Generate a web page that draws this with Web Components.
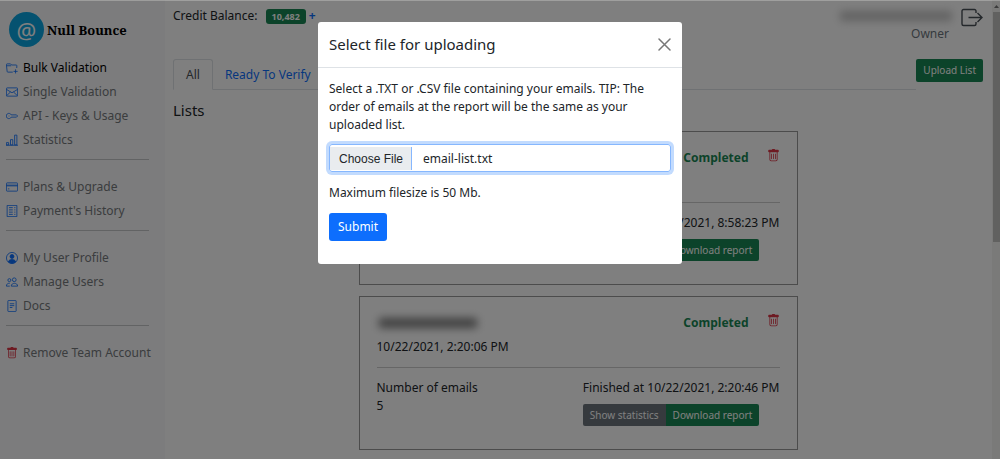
<!DOCTYPE html>
<html lang="en">
<head>
<meta charset="utf-8">
<meta name="viewport" content="width=device-width, initial-scale=1">
<title>Null Bounce</title>
<style>
    body {
        margin: 0;
        font: 12px/18px "Noto Sans", sans-serif;
        color: #212529;
        background: #fff;
        --blue: #0d6efd;
        --green: #198754;
        --red: #dc3545;
        --grey: #6c757d;
    }
</style>
</head>
<body>
<bounce-app></bounce-app>

<script>
const ICONS = {
    folder: '<path d="M9 13.5H2.5a1 1 0 0 1-1-1l-1-9a1 1 0 0 1 1-1h4.500L7.500 4h6a1 1 0 0 1 1 1L14.300 8M1 5h6M10 12.500h5.500M12.750 9.750v5.500"/>',
    envelope: '<path d="M1.5 2.5h13a1 1 0 0 1 1 1v9a1 1 0 0 1-1 1h-13a1 1 0 0 1-1-1v-9a1 1 0 0 1 1-1zM.5 4.5 8 9l7.5-4.5M.7 13 6 8M15.3 13 10 8"/>',
    key: '<path d="M7 6.500a3.500 3.500 0 1 0 0 3h7L15.500 8 14 6.500z"/><path d="M3.500 8h1"/>',
    bars: '<path d="M.5 11.500h3v3h-3zM6 7.500h3v7H6zM11.500 1.500h3v13h-3zM0 15h16"/>',
    card: '<path d="M1.5 2.5h13a1 1 0 0 1 1 1v9a1 1 0 0 1-1 1h-13a1 1 0 0 1-1-1v-9a1 1 0 0 1 1-1zM.5 5.500h15M.5 6.500h15M2.500 10.500h2"/>',
    receipt: '<path d="M1.5.5h13v15h-13zM4 3.5h5M4 6.5h5M4 9.5h5M4 12.5h5M11 3.5h1.500M11 6.500h1.500M11 9.500h1.500M11 12.500h1.500"/>',
    person: '<circle cx="8" cy="8" r="7.4"/><circle cx="8" cy="6" r="2.6" fill="currentColor"/><path fill="currentColor" d="M3 13c.8-2 2.5-3 5-3s4.2 1 5 3c-3 2.6-7 2.6-10 0z"/>',
    people: '<circle cx="11" cy="5" r="2.5"/><circle cx="4.5" cy="5.5" r="2"/><path d="M7 13.5c0-5 8.500-5 8.500 0zM5 13.500H.5c0-2.800 2-4 4.500-3.800"/>',
    file: '<path d="M3.5.5h9a1 1 0 0 1 1 1v13a1 1 0 0 1-1 1h-9a1 1 0 0 1-1-1v-13a1 1 0 0 1 1-1zM5 5h6M5 7.5h6M5 10h3.5"/>',
    trash: '<g fill="currentColor" stroke="none"><path d="M5.5 5.5A.5.5 0 0 1 6 6v6a.5.5 0 0 1-1 0V6a.5.5 0 0 1 .5-.5zm2.5 0a.5.5 0 0 1 .5.5v6a.5.5 0 0 1-1 0V6a.5.5 0 0 1 .5-.5zm3 .5a.5.5 0 0 0-1 0v6a.5.5 0 0 0 1 0V6z"/><path d="M14.5 3a1 1 0 0 1-1 1H13v9a2 2 0 0 1-2 2H5a2 2 0 0 1-2-2V4h-.5a1 1 0 0 1-1-1V2a1 1 0 0 1 1-1H6a1 1 0 0 1 1-1h2a1 1 0 0 1 1 1h3.500a1 1 0 0 1 1 1v1zM4.118 4 4 4.059V13a1 1 0 0 0 1 1h6a1 1 0 0 0 1-1V4.059L11.882 4H4.118zM2.500 3V2h11v1h-11z"/></g>',
};

class AppIcon extends HTMLElement {
    constructor() {
        super();
        this.attachShadow({mode: 'open'});
    }

    connectedCallback() {
        this.shadowRoot.innerHTML = `
        <style>
            :host {
                display: block;
                flex: none;
                width: 12px;
                height: 12px;
            }
            svg {
                display: block;
                width: 100%;
                height: 100%;
            }
        </style>
        <svg viewBox="0 0 16 16" fill="none" stroke="currentColor" stroke-width="1.1" aria-hidden="true">${ICONS[this.getAttribute('name')]}</svg>
        `;
    }
}

class NavItem extends HTMLElement {
    constructor() {
        super();
        this.attachShadow({mode: 'open'});
    }

    connectedCallback() {
        this.shadowRoot.innerHTML = `
        <style>
            :host {
                display: block;
            }
            a {
                display: flex;
                align-items: center;
                gap: 5px;
                padding: 3px 0;
                color: #777a7d;
                text-decoration: none;
                white-space: nowrap;
            }
            :host([active]) a {
                color: #000;
            }
            app-icon {
                color: var(--blue);
            }
            :host([danger]) app-icon {
                color: var(--red);
            }
        </style>
        <a href="#"><app-icon name="${this.getAttribute('icon')}"></app-icon><slot></slot></a>
        `;
    }
}

class SideBar extends HTMLElement {
    constructor() {
        super();
        this.attachShadow({mode: 'open'});
        this.shadowRoot.innerHTML = `
        <style>
            :host {
                display: block;
                box-sizing: border-box;
                flex: none;
                width: 165px;
                padding: 12px 16px 0 6px;
                background: #f8f9fa;
            }
            .brand {
                display: flex;
                align-items: center;
                gap: 3px;
                margin: 0 0 9px 3px;
                font: bold 13px/18px "Noto Serif", "Liberation Serif", serif;
                color: #000;
                text-decoration: none;
                white-space: nowrap;
            }
            .at {
                display: grid;
                place-items: center;
                width: 35px;
                height: 35px;
                border-radius: 50%;
                background: #0ba5e0;
                color: #fff;
                font: 22px/24px "Noto Sans", sans-serif;
            }
            hr {
                margin: 7px 0 15px;
                border: 0;
                border-top: 1px solid #c4c6c8;
            }
        </style>
        <a class="brand" href="#"><span class="at">@</span>Null Bounce</a>
        <nav>
            <nav-item icon="folder" active>Bulk Validation</nav-item>
            <nav-item icon="envelope">Single Validation</nav-item>
            <nav-item icon="key">API - Keys &amp; Usage</nav-item>
            <nav-item icon="bars">Statistics</nav-item>
            <hr>
            <nav-item icon="card">Plans &amp; Upgrade</nav-item>
            <nav-item icon="receipt">Payment's History</nav-item>
            <hr>
            <nav-item icon="person">My User Profile</nav-item>
            <nav-item icon="people">Manage Users</nav-item>
            <nav-item icon="file">Docs</nav-item>
            <hr>
            <nav-item icon="trash" danger>Remove Team Account</nav-item>
        </nav>
        `;
    }
}

class TopBar extends HTMLElement {
    constructor() {
        super();
        this.attachShadow({mode: 'open'});
        this.shadowRoot.innerHTML = `
        <style>
            :host {
                display: flex;
                justify-content: space-between;
                align-items: flex-start;
                height: 52px;
                padding-top: 7px;
            }
            .credit {
                display: flex;
                align-items: center;
            }
            .badge {
                margin: 0 3px 0 8px;
                padding: 0 6px;
                border-radius: 3px;
                background: var(--green);
                color: #fff;
                font-size: 9px;
                line-height: 15px;
                font-weight: bold;
            }
            .credit a {
                color: var(--blue);
                font-weight: bold;
                text-decoration: none;
            }
            .account {
                display: flex;
                align-items: flex-start;
                gap: 9px;
            }
            .user {
                display: flex;
                flex-direction: column;
                align-items: flex-end;
                width: 116px;
                color: var(--grey);
            }
            .user span {
                padding-right: 3px;
            }
            .name {
                width: 112px;
                height: 10px;
                margin: 4px 0;
                background: #c4c4c4;
                filter: blur(4px);
            }
            button {
                margin: 1px 0 0;
                padding: 0;
                border: 0;
                background: none;
                color: #495057;
            }
            svg {
                display: block;
            }
        </style>
        <div class="credit">Credit Balance: <span class="badge">10,482</span><a href="#">+</a></div>
        <div class="account">
            <div class="user"><div class="name"></div><span>Owner</span></div>
            <button type="button" aria-label="Log out">
                <svg width="22" height="19" viewBox="0 0 22 19" fill="none" stroke="currentColor" stroke-width="1.4"><path d="M15 5V3a1.500 1.500 0 0 0-1.500-1.500h-11A1.500 1.500 0 0 0 1 3v13a1.500 1.500 0 0 0 1.500 1.500h11A1.500 1.500 0 0 0 15 16v-2M7.500 9.500H21M16.500 5l4.500 4.500-4.500 4.500"/></svg>
            </button>
        </div>
        `;
    }
}

class ListTabs extends HTMLElement {
    constructor() {
        super();
        this.attachShadow({mode: 'open'});
        this.shadowRoot.innerHTML = `
        <style>
            :host {
                display: flex;
                align-items: flex-start;
            }
            nav {
                display: flex;
                flex: 1;
                border-bottom: 1px solid #dee2e6;
            }
            a {
                margin-bottom: -1px;
                padding: 6px 12px 5px;
                border: 1px solid transparent;
                border-radius: 3px 3px 0 0;
                color: var(--blue);
                text-decoration: none;
            }
            a + a {
                padding-left: 11px;
            }
            a.active {
                border-color: #dee2e6 #dee2e6 #fff;
                color: #495057;
            }
            button {
                padding: 3px 7px;
                border: 0;
                border-radius: 2px;
                background: var(--green);
                color: #fff;
                font: 10px/17px "Noto Sans", sans-serif;
            }
        </style>
        <nav><a class="active" href="#">All</a><a href="#">Ready To Verify</a></nav>
        <button type="button">Upload List</button>
        `;
    }
}

class ListCard extends HTMLElement {
    constructor() {
        super();
        this.attachShadow({mode: 'open'});
        this.shadowRoot.innerHTML = `
        <style>
            :host {
                display: block;
                padding: 17px 17px 23px;
                border: 1px solid #999;
            }
            header, footer {
                display: flex;
                justify-content: space-between;
                align-items: flex-start;
            }
            .name {
                width: 98px;
                height: 10px;
                margin: 4px 2px 10px;
                background: #808080;
                filter: blur(4px);
            }
            .created {
                min-height: 18px;
            }
            .state {
                display: flex;
                gap: 18px;
                color: var(--green);
                font-weight: bold;
            }
            .state button {
                padding: 0;
                border: 0;
                background: none;
                color: var(--red);
                height: 13px;
            }
            .state app-icon {
                width: 13px;
                height: 13px;
            }
            hr {
                margin: 11px 0;
                border: 0;
                border-top: 1px solid #ccc;
            }
            .actions {
                display: flex;
                margin-top: 7px;
            }
            .actions button {
                padding: 3px 7px;
                border: 0;
                background: var(--grey);
                border-radius: 2px 0 0 2px;
                color: #fff;
                font: 10px/16px "Noto Sans", sans-serif;
            }
            .actions button + button {
                background: var(--green);
                border-radius: 0 2px 2px 0;
            }
        </style>
        <header>
            <div><div class="name"></div><div class="created"><slot name="created"></slot></div></div>
            <div class="state">Completed <button type="button" aria-label="Delete list"><app-icon name="trash"></app-icon></button></div>
        </header>
        <hr>
        <footer>
            <div><slot name="count"></slot></div>
            <div>
                <slot name="finished"></slot>
                <div class="actions"><button type="button">Show statistics</button><button type="button">Download report</button></div>
            </div>
        </footer>
        `;
    }
}

class ScrollRail extends HTMLElement {
    constructor() {
        super();
        this.attachShadow({mode: 'open'});
        this.shadowRoot.innerHTML = `
        <style>
            :host {
                display: flex;
                flex-direction: column;
                flex: none;
                width: 8px;
                background: #f4f4f3;
            }
            svg {
                flex: none;
                margin: 5px 1px 4px 2px;
            }
            .thumb {
                height: 50%;
                margin-left: 1px;
                background: #c3c3c1;
            }
        </style>
        <svg width="5" height="3" viewBox="0 0 5 3"><path d="M0 3h5L2.500 0z" fill="#777"/></svg>
        <div class="thumb"></div>
        `;
    }
}

class UploadDialog extends HTMLElement {
    constructor() {
        super();
        this.attachShadow({mode: 'open'});
        this.shadowRoot.innerHTML = `
        <style>
            :host {
                display: block;
                position: fixed;
                inset: 0;
                background: rgba(0, 0, 0, .5);
                border-top: 1px solid rgba(255, 255, 250, .25);
            }
            dialog {
                position: static;
                box-sizing: border-box;
                width: 100%;
                max-width: 364px;
                margin: 21px auto 0;
                padding: 0;
                border: 0;
                border-radius: 3px;
                background: #fff;
                color: inherit;
            }
            header {
                display: flex;
                justify-content: space-between;
                align-items: center;
                padding: 11px 11px 12px;
                border-bottom: 1px solid #dee2e6;
            }
            h1 {
                margin: 0;
                font-size: 15px;
                line-height: 22px;
                font-weight: normal;
            }
            .close {
                padding: 0;
                border: 0;
                background: none;
                color: #777;
            }
            svg {
                display: block;
            }
            form {
                padding: 12px 11px 23px;
            }
            p, label {
                display: block;
                margin: 0;
            }
            input {
                box-sizing: border-box;
                display: block;
                width: 100%;
                height: 28px;
                margin: 10px 0 12px;
                padding: 2px 0 0;
                border: 1px solid #86b7fe;
                border-radius: 3px;
                box-shadow: 0 0 0 3px rgba(13, 110, 253, .25);
                outline: 0;
                font: inherit;
                color: inherit;
            }
            input::file-selector-button {
                height: 23px;
                margin: 0 11px 0 0;
                padding: 0 8px 0 9px;
                border: 0;
                border-right: 1px solid #86b7fe;
                background: #e9ecef;
                color: #212529;
                font: 12px/18px "Liberation Sans", sans-serif;
            }
            .submit {
                display: block;
                margin-top: 11px;
                padding: 5px 9px;
                border: 0;
                border-radius: 3px;
                background: var(--blue);
                color: #fff;
                font: inherit;
            }
        </style>
        <dialog open aria-labelledby="title">
            <header>
                <h1 id="title">Select file for uploading</h1>
                <button class="close" type="button" aria-label="Close">
                    <svg width="13" height="13" viewBox="0 0 13 13" stroke="currentColor" stroke-width="1.5" stroke-linecap="round"><path d="M1 1l11 11M12 1 1 12"/></svg>
                </button>
            </header>
            <form>
                <label for="file">Select a .TXT or .CSV file containing your emails. TIP: The order of emails at the report will be the same as your uploaded list.</label>
                <input id="file" type="file" accept=".txt,.csv">
                <p>Maximum filesize is 50 Mb.</p>
                <button class="submit" type="submit">Submit</button>
            </form>
        </dialog>
        `;
        this.setFile('email-list.txt');

        this.shadowRoot.querySelector('.close').addEventListener('click', () => this.remove());
        this.shadowRoot.querySelector('form').addEventListener('submit', (e) => e.preventDefault());
    }

    setFile(name) {
        const transfer = new DataTransfer();
        transfer.items.add(new File([''], name, {type: 'text/plain'}));
        this.shadowRoot.querySelector('input').files = transfer.files;
    }
}

class BounceApp extends HTMLElement {
    constructor() {
        super();
        this.attachShadow({mode: 'open'});
        this.shadowRoot.innerHTML = `
        <style>
            :host {
                display: flex;
                height: 100vh;
                overflow: hidden;
            }
            main {
                flex: 1;
                min-width: 0;
                padding: 0 9px 0 8px;
            }
            h2 {
                margin: 9px 0 10px;
                font-size: 15px;
                line-height: 22px;
                font-weight: normal;
            }
            .lists {
                display: grid;
                gap: 11px;
                max-width: 439px;
                margin: 0 auto;
            }
        </style>
        <side-bar></side-bar>
        <main>
            <top-bar></top-bar>
            <list-tabs></list-tabs>
            <h2>Lists</h2>
            <div class="lists">
                <list-card>
                    <span slot="finished">Finished at 10/22/2021, 8:58:23 PM</span>
                </list-card>
                <list-card>
                    <span slot="created">10/22/2021, 2:20:06 PM</span>
                    <span slot="count">Number of emails<br>5</span>
                    <span slot="finished">Finished at 10/22/2021, 2:20:46 PM</span>
                </list-card>
            </div>
        </main>
        <scroll-rail></scroll-rail>
        <upload-dialog></upload-dialog>
        `;
    }
}

customElements.define('app-icon', AppIcon);
customElements.define('nav-item', NavItem);
customElements.define('side-bar', SideBar);
customElements.define('top-bar', TopBar);
customElements.define('list-tabs', ListTabs);
customElements.define('list-card', ListCard);
customElements.define('scroll-rail', ScrollRail);
customElements.define('upload-dialog', UploadDialog);
customElements.define('bounce-app', BounceApp);
</script>
</body>
</html>
